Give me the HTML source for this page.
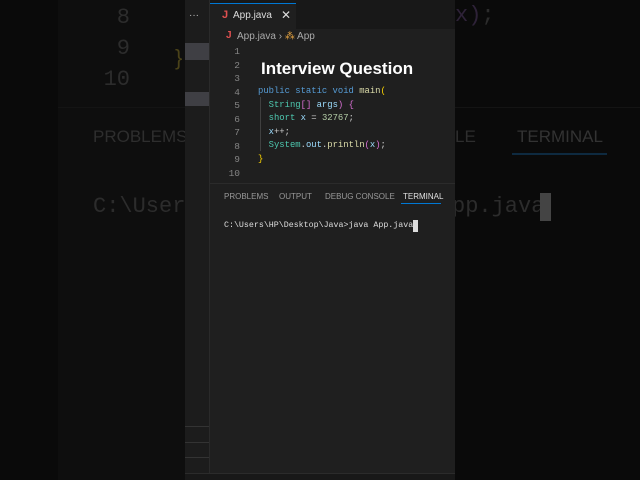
<!DOCTYPE html>
<html><head><meta charset="utf-8"><style>
*{margin:0;padding:0;box-sizing:border-box}
body{width:640px;height:480px;background:#0a0a0a;position:relative;overflow:hidden;font-family:"Liberation Sans",sans-serif}
.a{position:absolute;white-space:nowrap}
.m{font-family:"Liberation Mono","DejaVu Sans Mono",monospace}
</style></head><body>
<div class="a" style="left:58px;top:0;width:130px;height:480px;background:#0e0e0e"></div>
<div class="a" style="left:58px;top:107px;width:582px;height:1px;background:#141414"></div>
<div class="a m" style="left:98px;top:2px;font-size:22px;color:#2c2c2c;line-height:31px;text-align:right;width:32px">8<br>9<br>10</div>
<div class="a" style="left:175px;top:45px;color:#4a4218;font-size:22px">}</div>
<div class="a" style="left:93px;top:127px;font-size:17px;color:#2e2e2e">PROBLEMS</div>
<div class="a m" style="left:93px;top:194px;font-size:22px;color:#2c2c2c">C:\Users</div>
<div class="a m" style="left:455px;top:3px;font-size:22px;color:#2c2c2c"><span style="color:#2e2238">x)</span>;</div>
<div class="a" style="left:455px;top:127px;font-size:17px;color:#2e2e2e">LE</div>
<div class="a" style="left:517px;top:127px;font-size:17px;color:#333">TERMINAL</div>
<div class="a" style="left:512px;top:153px;width:95px;height:2px;background:#0e2a40"></div>
<div class="a m" style="left:452px;top:194px;font-size:22px;color:#2c2c2c">pp.java</div>
<div class="a" style="left:540px;top:193px;width:11px;height:28px;background:#444"></div>

<div class="a" style="left:185px;top:0;width:25px;height:480px;background:#1c1c1c"></div>
<div class="a" style="left:185px;top:43px;width:25px;height:17px;background:#3f3f44"></div>
<div class="a" style="left:185px;top:92px;width:25px;height:14px;background:#3f3f44"></div>
<div class="a" style="left:185px;top:426px;width:25px;height:1px;background:#333"></div>
<div class="a" style="left:185px;top:442px;width:25px;height:1px;background:#333"></div>
<div class="a" style="left:185px;top:457px;width:25px;height:1px;background:#333"></div>
<div class="a" style="left:189px;top:10px;font-size:10px;color:#bbb">···</div>
<div class="a" style="left:209px;top:0;width:1px;height:473px;background:#2a2a2a"></div>
<div class="a" style="left:210px;top:0;width:245px;height:473px;background:#1f1f1f"></div>
<div class="a" style="left:210px;top:0;width:245px;height:29px;background:#181818"></div>
<div class="a" style="left:210px;top:3px;width:86px;height:26px;background:#1f1f1f;border-top:1px solid #0078d4"></div>
<div class="a" style="left:222px;top:9px;font-size:11px;color:#e05050;font-weight:bold">J</div>
<div class="a" style="left:233px;top:10px;font-size:10px;color:#ddd">App.java</div>
<div class="a" style="left:281px;top:8px;font-size:12px;color:#ddd">✕</div>
<div class="a" style="left:226px;top:30px;font-size:10px;color:#e05050;font-weight:bold">J</div>
<div class="a" style="left:237px;top:31px;font-size:10px;color:#aaa">App.java ›  <span style="color:#e0a040">⁂</span> App</div>
<div class="a m" style="left:222px;top:45px;font-size:9.5px;line-height:13.5px;color:#858585;text-align:right;width:18px">1<br>2<br>3<br>4<br>5<br>6<br>7<br>8<br>9<br>10</div>
<div class="a" style="left:261px;top:59px;font-size:17px;font-weight:bold;color:#fff">Interview Question</div>
<div class="a m" style="left:258px;top:85px;font-size:8.9px;line-height:13.5px;color:#ccc">
<span style="color:#569cd6">public static void </span><span style="color:#dcdcaa">main</span><span style="color:#ffd700">(</span><br>
&nbsp;&nbsp;<span style="color:#4ec9b0">String</span><span style="color:#da70d6">[]</span> <span style="color:#9cdcfe">args</span><span style="color:#da70d6">)</span> <span style="color:#da70d6">{</span><br>
&nbsp;&nbsp;<span style="color:#4ec9b0">short</span> <span style="color:#9cdcfe">x</span> = <span style="color:#b5cea8">32767</span>;<br>
&nbsp;&nbsp;<span style="color:#9cdcfe">x</span>++;<br>
&nbsp;&nbsp;<span style="color:#4ec9b0">System</span>.<span style="color:#9cdcfe">out</span>.<span style="color:#dcdcaa">println</span><span style="color:#da70d6">(</span><span style="color:#9cdcfe">x</span><span style="color:#da70d6">)</span>;<br>
<span style="color:#ffd700">}</span></div>
<div class="a" style="left:260px;top:97px;width:1px;height:54px;background:#404040"></div>
<div class="a" style="left:210px;top:183px;width:245px;height:1px;background:#2b2b2b"></div>
<div class="a" style="left:224px;top:192px;font-size:8px;color:#999">PROBLEMS</div>
<div class="a" style="left:279px;top:192px;font-size:8px;color:#999">OUTPUT</div>
<div class="a" style="left:325px;top:192px;font-size:8px;color:#999">DEBUG CONSOLE</div>
<div class="a" style="left:403px;top:192px;font-size:8px;color:#e0e0e0">TERMINAL</div>
<div class="a" style="left:401px;top:203px;width:40px;height:1px;background:#0078d4"></div>
<div class="a m" style="left:224px;top:221px;font-size:8.3px;color:#ddd">C:\Users\HP\Desktop\Java&gt;java App.java</div>
<div class="a" style="left:413px;top:220px;width:5px;height:12px;background:#ddd"></div>
<div class="a" style="left:185px;top:473px;width:270px;height:7px;background:#181818;border-top:1px solid #2b2b2b"></div>
</body></html>
